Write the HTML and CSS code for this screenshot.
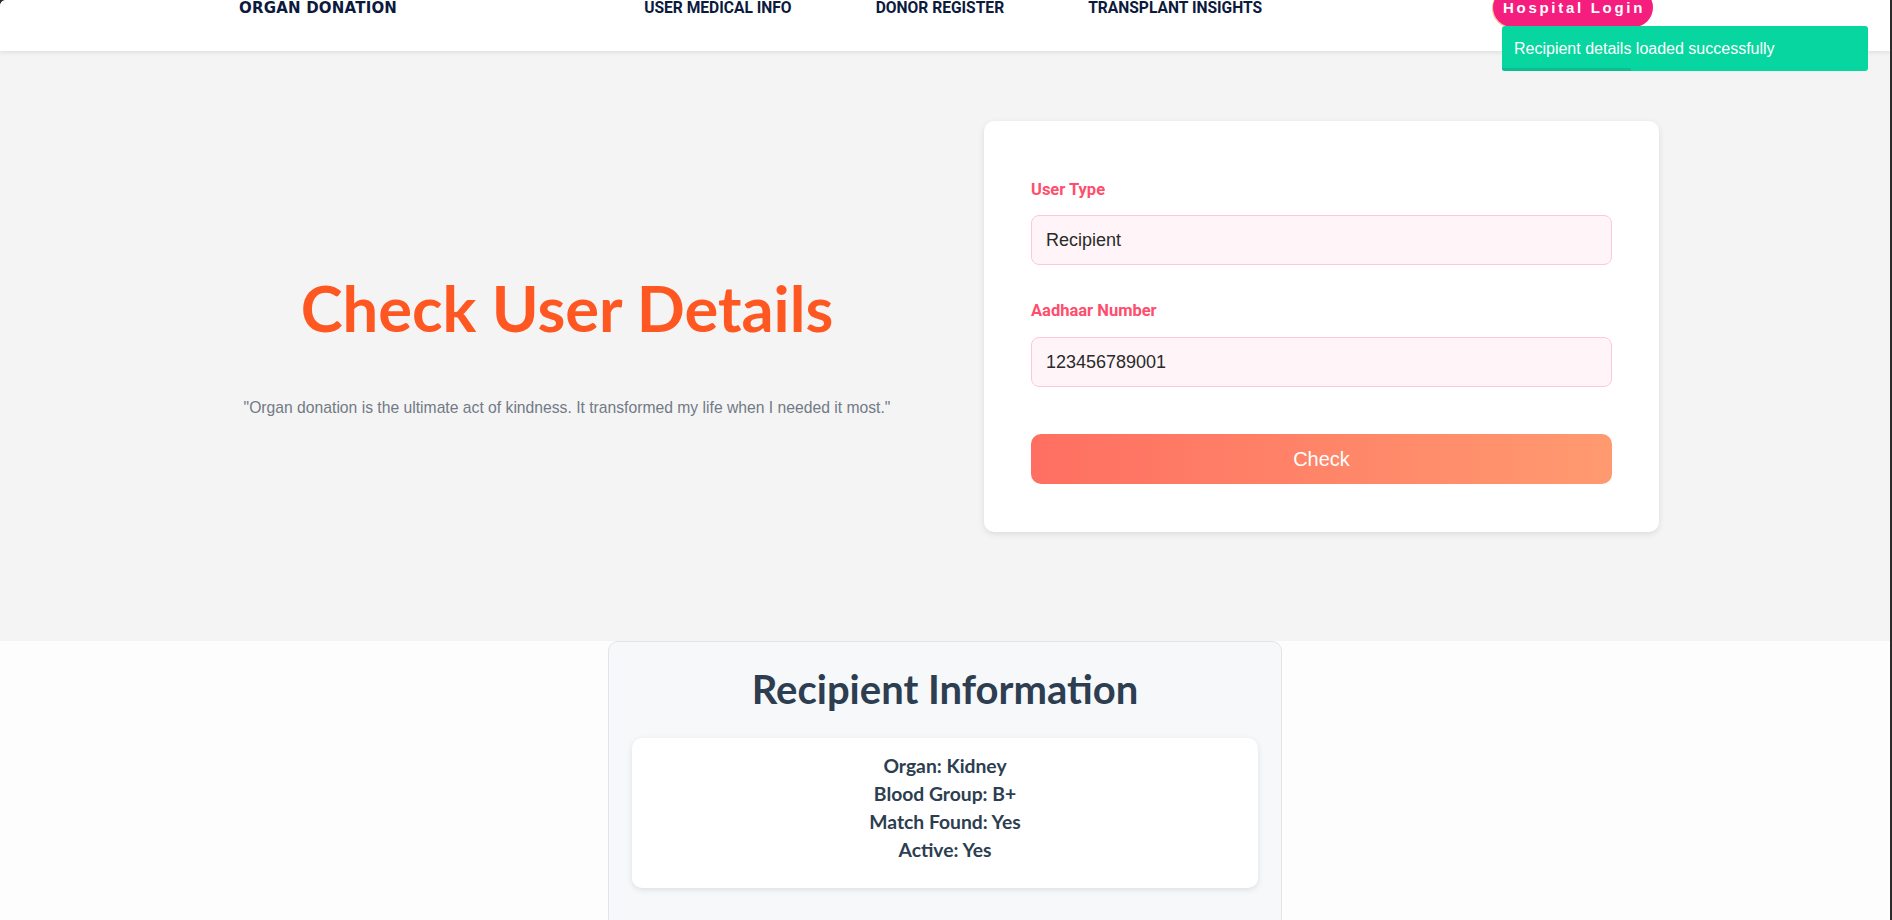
FILE: index.html
```html
<!DOCTYPE html>
<html lang="en">
<head>
<meta charset="utf-8">
<title>Check User Details</title>
<link rel="stylesheet" href="styles.css">
</head>
<body>
<div class="page">
  <header class="topbar">
    <div class="logo">ORGAN DONATION</div>
    <nav class="nav">
      <a class="nav-link" href="#">USER MEDICAL INFO</a>
      <a class="nav-link" href="#">DONOR REGISTER</a>
      <a class="nav-link" href="#">TRANSPLANT INSIGHTS</a>
    </nav>
    <a class="login-btn" href="#">Hospital Login</a>
  </header>

  <div class="toast">
    <span class="toast-text">Recipient details loaded successfully</span>
    <span class="toast-progress"></span>
  </div>

  <section class="hero">
    <div class="hero-left">
      <h1 class="hero-title">Check User Details</h1>
      <p class="hero-quote">"Organ donation is the ultimate act of kindness. It transformed my life when I needed it most."</p>
    </div>
    <form class="form-card">
      <label class="field-label">User Type</label>
      <div class="field-input">Recipient</div>
      <label class="field-label second">Aadhaar Number</label>
      <div class="field-input">123456789001</div>
      <button type="button" class="check-btn">Check</button>
    </form>
  </section>

  <section class="result">
    <div class="result-card">
      <h2 class="result-title">Recipient Information</h2>
      <div class="result-box">
        <p class="result-line">Organ: Kidney</p>
        <p class="result-line">Blood Group: B+</p>
        <p class="result-line">Match Found: Yes</p>
        <p class="result-line">Active: Yes</p>
      </div>
    </div>
  </section>
</div>
</body>
</html>
```

FILE: styles.css
```css
html {
  background: #2b2b2b;
  height: 100%;
}
body {
  margin: 0;
  height: 100%;
  overflow: hidden;
}
.page {
  position: relative;
  margin-right: 2px;
  height: 100%;
  background: #fdfdfd;
  border-top-left-radius: 6px;
  overflow: hidden;
}

/* Header */
.topbar {
  position: relative;
  z-index: 2;
  height: 51px;
  background: #ffffff;
  box-shadow: 0 2px 4px rgba(0, 0, 0, 0.08);
  display: flex;
  align-items: flex-start;
  padding-left: 239px;
  padding-right: 237px;
}
.logo {
  font-family: "DejaVu Sans", sans-serif;
  font-weight: 700;
  font-size: 15px;
  line-height: 17px;
  color: #0b1a3d;
  margin-top: 0;
  letter-spacing: 0.2px;
}
.nav {
  display: flex;
  gap: 84px;
  margin-left: 247px;
  margin-top: -1px;
}
.nav-link {
  font-family: Roboto, sans-serif;
  font-weight: 700;
  font-size: 15.6px;
  line-height: 18px;
  color: #0b1a3d;
  text-decoration: none;
}
.login-btn {
  margin-left: auto;
  margin-top: -12px;
  padding: 11px 8px 11px 10px;
  border-radius: 20px;
  background: #f51e7e;
  box-shadow: -1px 1px 0 rgba(255, 150, 60, 0.55);
  color: #ffffff;
  font-family: "Liberation Sans", Arial, sans-serif;
  font-weight: 700;
  font-size: 15px;
  line-height: 17px;
  letter-spacing: 2.7px;
  text-decoration: none;
}

/* Toast */
.toast {
  position: absolute;
  z-index: 5;
  left: 1502px;
  top: 26px;
  width: 366px;
  height: 45px;
  box-sizing: border-box;
  background: #07d6a0;
  border-radius: 3px;
  padding-left: 12px;
  display: flex;
  align-items: center;
  overflow: hidden;
}
.toast-text {
  font-family: "Liberation Sans", Arial, sans-serif;
  font-size: 16px;
  color: #ffffff;
}
.toast-progress {
  position: absolute;
  left: 0;
  bottom: 0;
  width: 129px;
  height: 3px;
  background: #0bbd90;
}

/* Hero */
.hero {
  background: #f4f4f4;
  display: flex;
  align-items: flex-start;
  gap: 76px;
  padding: 70px 0 109px 226px;
}
.hero-left {
  width: 682px;
  text-align: center;
}
.hero-title {
  margin: 149px 0 0;
  font-family: Lato, sans-serif;
  font-weight: 700;
  font-size: 63.3px;
  line-height: 1.2;
  color: #ff5722;
}
.hero-quote {
  margin: 53px 0 0;
  font-family: "Liberation Sans", Arial, sans-serif;
  font-size: 15.7px;
  line-height: 18px;
  color: #727a86;
}
.form-card {
  width: 675px;
  box-sizing: border-box;
  background: #ffffff;
  border-radius: 10px;
  box-shadow: 0 2px 6px rgba(0, 0, 0, 0.1);
  padding: 58px 47px 48px;
  display: flex;
  flex-direction: column;
}
.field-label {
  font-family: Roboto, sans-serif;
  font-weight: 700;
  font-size: 16.5px;
  line-height: 22px;
  color: #ff4d6d;
  margin-bottom: 14px;
}
.field-label.second {
  margin-top: 35px;
  margin-bottom: 15px;
}
.field-input {
  height: 50px;
  box-sizing: border-box;
  border: 1px solid #ffc8d6;
  border-radius: 8px;
  background: #fff5f8;
  padding-left: 14px;
  display: flex;
  align-items: center;
  font-family: "Liberation Sans", Arial, sans-serif;
  font-size: 18px;
  color: #2a2a2a;
}
.check-btn {
  margin-top: 47px;
  height: 50px;
  border: none;
  border-radius: 10px;
  background: linear-gradient(90deg, #ff6f61 0%, #ff9a70 100%);
  color: #ffffff;
  font-family: "Liberation Sans", Arial, sans-serif;
  font-size: 20px;
}

/* Result */
.result {
  display: flex;
  justify-content: center;
}
.result-card {
  width: 674px;
  box-sizing: border-box;
  background: #f7f8fa;
  border: 1px solid #e1e4e8;
  border-radius: 10px;
  padding: 23px 23px 40px;
}
.result-title {
  margin: 0 0 25px;
  text-align: center;
  font-family: Lato, sans-serif;
  font-weight: 700;
  font-size: 40px;
  line-height: 1.2;
  color: #2c3e50;
}
.result-box {
  background: #ffffff;
  border-radius: 10px;
  box-shadow: 0 2px 6px rgba(0, 0, 0, 0.1);
  padding: 14px 20px 24px;
  text-align: center;
}
.result-line {
  margin: 0;
  font-family: Lato, sans-serif;
  font-weight: 700;
  font-size: 19.3px;
  line-height: 28px;
  color: #2c3e50;
}
```
